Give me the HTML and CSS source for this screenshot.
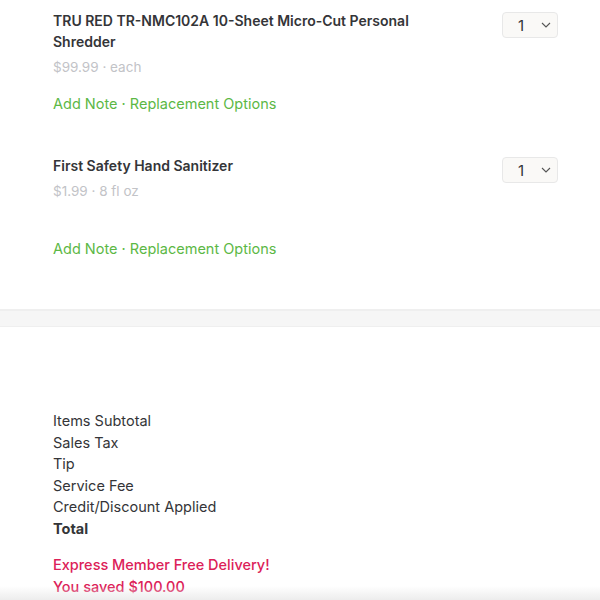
FILE: index.html
```html
<!DOCTYPE html>
<html>
<head>
<meta charset="utf-8">
<link rel="stylesheet" href="styles.css">
</head>
<body>
<div class="items">
  <div class="item">
    <div class="item-top">
      <div class="info">
        <div class="title">TRU RED TR-NMC102A 10-Sheet Micro-Cut Personal Shredder</div>
        <div class="price">$99.99 · each</div>
      </div>
      <div class="qty"><span class="num">1</span><svg class="chev" width="10" height="6" viewBox="0 0 10 6"><path d="M1 1l4 4 4-4" fill="none" stroke="#555" stroke-width="1.1"/></svg></div>
    </div>
    <div class="links">Add Note · Replacement Options</div>
  </div>
  <div class="item">
    <div class="item-top">
      <div class="info">
        <div class="title">First Safety Hand Sanitizer</div>
        <div class="price">$1.99 · 8 fl oz</div>
      </div>
      <div class="qty"><span class="num">1</span><svg class="chev" width="10" height="6" viewBox="0 0 10 6"><path d="M1 1l4 4 4-4" fill="none" stroke="#555" stroke-width="1.1"/></svg></div>
    </div>
    <div class="links">Add Note · Replacement Options</div>
  </div>
</div>
<div class="band"></div>
<div class="summary">
  <div class="row">Items Subtotal</div>
  <div class="row">Sales Tax</div>
  <div class="row">Tip</div>
  <div class="row">Service Fee</div>
  <div class="row">Credit/Discount Applied</div>
  <div class="row total">Total</div>
  <div class="promo">
    <div>Express Member Free Delivery!</div>
    <div>You saved $100.00</div>
  </div>
</div>
<div class="fade"></div>
</body>
</html>
```
FILE: styles.css
```css
html, body { margin: 0; padding: 0; background: #fff; }
body { font-family: Inter, "Open Sans", sans-serif; color: #343538; width: 600px; height: 600px; overflow: hidden; position: relative; }
.items { padding: 10px 42px 0 53px; }
.item { padding-bottom: 41px; }
.item:last-child { padding-bottom: 50px; }
.item-top { display: flex; align-items: flex-start; min-height: 82px; }
.info { flex: 1; padding-right: 20px; }
.title { font-size: 14px; font-weight: 600; line-height: 21px; color: #343538; max-width: 380px; }
.price { font-size: 13.5px; line-height: 21px; color: #c2c3c7; margin-top: 5px; }
.links { font-size: 14.5px; line-height: 21px; color: #5cb845; margin-top: 1px; }
.qty { width: 54px; height: 24px; margin-top: 2px; border: 1px solid #e8e8e8; border-radius: 4px; background: #faf9f7; display: flex; align-items: center; box-sizing: content-box; }
.num { font-size: 15px; margin-left: 15px; width: 20px; color: #343538; }
.chev { margin-left: 3px; }
.band { height: 15px; background: #f6f6f6; border-top: 2px solid #efefef; border-bottom: 1px solid #efefef; }
.summary { padding: 83px 53px 0; }
.row { font-size: 14.5px; line-height: 21.5px; }
.total { font-weight: 700; }
.promo { margin-top: 15px; color: #dc2158; font-size: 14.5px; font-weight: 500; line-height: 22px; }
.fade { position: absolute; left: 0; right: 0; bottom: 0; height: 14px; background: linear-gradient(to bottom, rgba(240,240,240,0), rgba(232,232,232,0.8)); }
```
